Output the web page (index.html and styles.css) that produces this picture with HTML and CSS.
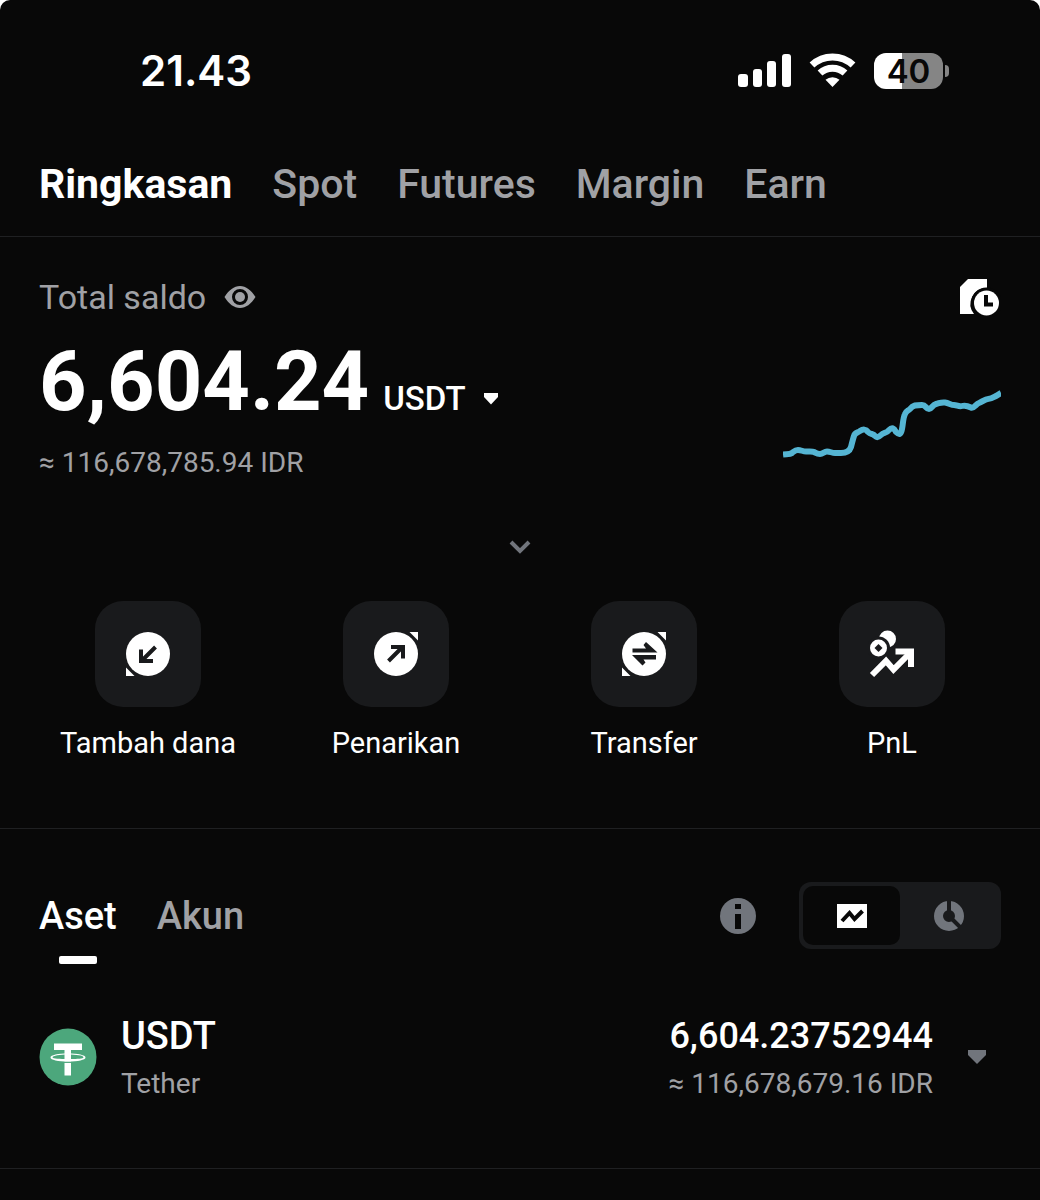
FILE: index.html
```html
<!DOCTYPE html>
<html lang="id">
<head>
  <meta charset="UTF-8" />
  <title>Ringkasan Aset</title>
  <meta name="viewport" content="width=device-width, initial-scale=1" />
  <link rel="stylesheet" href="styles.css">
</head>
<body>
  <div class="app">
    <header class="status-bar">
      <time class="clock">21.43</time>
      <div class="status-icons">
        <svg width="54" height="36" viewBox="0 0 54 36" fill="#fff" aria-hidden="true">
          <rect x="0" y="21" width="10" height="13" rx="3"/>
          <rect x="15" y="16" width="9" height="18" rx="3"/>
          <rect x="29" y="8" width="9" height="26" rx="3"/>
          <rect x="44" y="1" width="9" height="33" rx="3"/>
        </svg>
        <svg width="48" height="36" viewBox="0 0 48 36" fill="none" stroke="#fff" aria-hidden="true">
          <path d="M3 12A30 30 0 0 1 44 12" stroke-width="7"/>
          <path d="M11 20A18.500 18.500 0 0 1 36 20" stroke-width="7"/>
          <path d="M23.500 34l-7-7.200a10.500 10.500 0 0 1 14 0z" fill="#fff" stroke="none"/>
        </svg>
        <div class="battery"><span class="battery-body">40</span><span class="battery-tip"></span></div>
      </div>
    </header>

    <nav class="main-tabs">
      <a href="#ringkasan" class="active">Ringkasan</a>
      <a href="#spot">Spot</a>
      <a href="#futures">Futures</a>
      <a href="#margin">Margin</a>
      <a href="#earn">Earn</a>
    </nav>

    <section class="summary">
      <div class="balance">
        <div class="balance-info">
          <div class="balance-label">
            <span>Total saldo</span>
            <button class="icon-btn" aria-label="Sembunyikan saldo">
              <svg width="32" height="24" viewBox="0 0 32 24" aria-hidden="true">
                <path fill="#a0a1a5" fill-rule="evenodd" d="M.5 12C5 5 10 1 16 1s11 4 15.500 11C27 19 22 23 16 23S5 19 .5 12zM16 4a8 8 0 1 0 0 16 8 8 0 0 0 0-16z"/>
                <circle cx="16" cy="12" r="5" fill="#a0a1a5"/>
              </svg>
            </button>
          </div>
          <div class="balance-amount">
            <strong>6,604.24</strong>
            <button class="currency">USDT
              <svg width="16" height="12" viewBox="0 0 16 12" aria-hidden="true"><path fill="#fff" d="M1 0h14v4L8 11.500 1 4z"/></svg>
            </button>
          </div>
          <div class="balance-fiat">≈ 116,678,785.94 IDR</div>
        </div>
        <div class="balance-side">
          <button class="icon-btn" aria-label="Riwayat">
            <svg width="42" height="40" viewBox="0 0 42 40" aria-hidden="true">
              <path fill="#fff" d="M1 37V10l8-8h19v9a16 16 0 0 0-13 26z"/>
              <circle cx="27.500" cy="26" r="15.500" fill="#080808"/>
              <circle cx="27.500" cy="26" r="12.500" fill="#fff"/>
              <path d="M27 18v9.500h7" fill="none" stroke="#080808" stroke-width="4"/>
            </svg>
          </button>
          <svg class="chart" width="218" height="80" viewBox="0 0 218 80" fill="none" stroke="#55b5d3" stroke-width="6" stroke-linejoin="round" aria-hidden="true">
            <path d="M0 70.500C4 70 7 70.500 9 69S12 66 15 66S20 67.500 23 67.500S29 67 31 68S34 70 37 70S41 67.500 44 67.500S49 69 52 69H58C64 69 67 66 68 63C69 59 70 55 71 52C72 48 75 49 77 47C80 45 83 45 85 48C88 51 90 49 92 52C94 54 96 53 98 51C101 48 103 50 106 46C109 43 111 44 113 48C116 51 118 51 119 45C120 40 120 34 122 30C123 27 125 27 127 25C130 21 133 21 139 21C143 21 143 25 146 25S149 21 153 20S158 18 162 18.500S168 21 171 21S176 23 179 22S185 22 188 23.500S193 20 196 19S202 15 205 15S211 13 213 12S216 10 218 9"/>
          </svg>
        </div>
      </div>
      <button class="expand" aria-label="Tampilkan lebih banyak">
        <svg width="24" height="16" viewBox="0 0 24 16" aria-hidden="true"><path d="M3 3l9 9 9-9" fill="none" stroke="#71757c" stroke-width="4"/></svg>
      </button>

      <div class="actions">
        <button class="action">
          <span class="tile">
            <svg width="48" height="48" viewBox="0 0 48 48" aria-hidden="true">
              <path fill="#fff" d="M2 37.500L10.500 46H2z"/>
              <circle cx="24" cy="24" r="22" fill="#fff"/>
              <path d="M31.500 17L19 29.500M17 19.500V31H29" fill="none" stroke="#191a1c" stroke-width="4"/>
            </svg>
          </span>
          Tambah dana
        </button>
        <button class="action">
          <span class="tile">
            <svg width="48" height="48" viewBox="0 0 48 48" aria-hidden="true">
              <path fill="#fff" d="M37.500 2H46v8.500z"/>
              <circle cx="24" cy="24" r="22" fill="#fff"/>
              <path d="M16.500 31L29 18.500M19 17H31V28.500" fill="none" stroke="#191a1c" stroke-width="4"/>
            </svg>
          </span>
          Penarikan
        </button>
        <button class="action">
          <span class="tile">
            <svg width="48" height="48" viewBox="0 0 48 48" aria-hidden="true">
              <path fill="#fff" d="M37.500 2H46v8.500zM2 37.500L10.500 46H2z"/>
              <circle cx="24" cy="24" r="22" fill="#fff"/>
              <path fill="#191a1c" d="M12.500 18.500H26L23.500 15l2.500-3 11.500 10.500H12.500zM36 29.500H23.500L25.500 32.500l-3 3L12 25H36z"/>
            </svg>
          </span>
          Transfer
        </button>
        <button class="action">
          <span class="tile">
            <svg width="48" height="48" viewBox="0 0 48 48" aria-hidden="true">
              <circle cx="19.500" cy="9" r="8.500" fill="#fff"/>
              <circle cx="10.500" cy="18" r="11.500" fill="#191a1c"/>
              <circle cx="10.500" cy="18" r="8.500" fill="#fff"/>
              <path fill="#191a1c" d="M10.500 14l4 4-4 4-4-4z"/>
              <path d="M4 45L18 31l7.500 8.500L41 24" fill="none" stroke="#fff" stroke-width="6"/>
              <path fill="#fff" d="M27.500 18.500H46V37h-6V24.500H27.500z"/>
            </svg>
          </span>
          PnL
        </button>
      </div>
    </section>

    <section class="assets">
      <div class="assets-head">
        <div class="asset-tabs">
          <button class="active">Aset</button>
          <button>Akun</button>
        </div>
        <button class="icon-btn" aria-label="Info">
          <svg width="36" height="36" viewBox="0 0 36 36" aria-hidden="true">
            <circle cx="18" cy="18" r="18" fill="#71757c"/>
            <path fill="#080808" d="M15 6h6v5h-6zM15 16h6v15h-6z"/>
          </svg>
        </button>
        <div class="view-switch">
          <button class="active" aria-label="Grafik">
            <svg width="30" height="24" viewBox="0 0 30 24" aria-hidden="true">
              <path fill="#fff" d="M0 0h30v24H0z"/>
              <path d="M5 17l7.500-8 5 6L25.500 7" fill="none" stroke="#080808" stroke-width="4"/>
            </svg>
          </button>
          <button aria-label="Alokasi">
            <svg width="30" height="30" viewBox="0 0 30 30" aria-hidden="true">
              <circle cx="15" cy="15" r="10.500" fill="none" stroke="#71757c" stroke-width="9"/>
              <path d="M15 15V0M15 15l11 11" stroke="#191a1c" stroke-width="4"/>
            </svg>
          </button>
        </div>
      </div>

      <div class="asset-row">
        <svg class="coin" width="58" height="58" viewBox="0 0 58 58" aria-hidden="true">
          <circle cx="29" cy="29" r="28.500" fill="#4ca77c"/>
          <path fill="#fff" d="M15 15.500h28V22H32v25.500h-6.500V22H15z"/>
          <path d="M25 34.200h8" fill="none" stroke="#4ca77c" stroke-width="1.500"/>
          <path fill="#fff" fill-rule="evenodd" d="M29 25.500C19 25.500 11.500 27 11.500 29.500S19 33.500 29 33.500 46.500 32 46.500 29.500 39 25.500 29 25.500zM29 26.500C37 26.500 44.500 27.500 44.500 29.300S37 31 29 31 13.500 31 13.500 29.300 21 26.500 29 26.500z"/>
        </svg>
        <div class="asset-name">
          <div class="primary">USDT</div>
          <div class="secondary">Tether</div>
        </div>
        <div class="asset-value">
          <div class="primary amount">6,604.23752944</div>
          <div class="secondary">≈ 116,678,679.16 IDR</div>
        </div>
        <button class="icon-btn row-toggle" aria-label="Rincian USDT">
          <svg width="20" height="16" viewBox="0 0 20 16" aria-hidden="true"><path fill="#71757c" d="M1 1h18v5l-9 9-9-9z"/></svg>
        </button>
      </div>
    </section>
  </div>
</body>
</html>
```
FILE: styles.css
```css
* {
  box-sizing: border-box;
}
body {
  margin: 0;
  background: #fff;
  font-family: Roboto, sans-serif;
  color: #fff;
}
.app {
  background: #080808;
  border-radius: 10px 10px 0 0;
  min-height: 100vh;
}
button {
  background: none;
  border: none;
  padding: 0;
  font: inherit;
  color: inherit;
  cursor: pointer;
}
svg {
  display: block;
  flex-shrink: 0;
}

/* status bar */
.status-bar {
  display: flex;
  justify-content: space-between;
  align-items: center;
  height: 141px;
  padding: 0 91px 0 140px;
}
.clock {
  font-family: Inter, sans-serif;
  font-weight: 600;
  font-size: 42px;
}
.status-icons {
  display: flex;
  align-items: center;
  gap: 17px;
}
.battery {
  display: flex;
  align-items: center;
  gap: 2px;
}
.battery-body {
  width: 69px;
  height: 36px;
  border-radius: 12px;
  background: linear-gradient(90deg, #fff 40%, #858585 40%);
  color: #080808;
  font-family: Inter, sans-serif;
  font-weight: 600;
  font-size: 33px;
  line-height: 36px;
  text-align: center;
}
.battery-tip {
  width: 4px;
  height: 12px;
  border-radius: 0 4px 4px 0;
  background: #858585;
}

/* tabs */
.main-tabs {
  display: flex;
  gap: 40px;
  padding: 19px 39px 28px;
  border-bottom: 1px solid #1f2022;
  font-size: 41px;
  line-height: 48px;
  font-weight: 500;
}
.main-tabs a {
  color: #a0a1a5;
  text-decoration: none;
}
.main-tabs a.active {
  color: #fff;
  font-weight: 700;
}

/* balance */
.summary {
  padding: 40px 0 67px;
  border-bottom: 1px solid #1f2022;
}
.balance {
  display: flex;
  justify-content: space-between;
  padding: 0 39px;
}
.balance-label {
  display: flex;
  align-items: center;
  gap: 18px;
  font-size: 34px;
  line-height: 40px;
  color: #a0a1a5;
}
.balance-amount {
  display: flex;
  align-items: baseline;
  gap: 14px;
  margin-top: 21px;
}
.balance-amount strong {
  font-size: 83px;
  line-height: 88px;
  font-weight: 700;
}
.currency {
  display: flex;
  align-items: center;
  gap: 17px;
  font-size: 33px;
  line-height: 40px;
  font-weight: 500;
}
.balance-fiat {
  margin-top: 19px;
  font-size: 28px;
  line-height: 36px;
  color: #a0a1a5;
}
.balance-side {
  display: flex;
  flex-direction: column;
  align-items: flex-end;
  gap: 67px;
}
.expand {
  display: flex;
  justify-content: center;
  align-items: center;
  width: 100%;
  height: 40px;
  margin-top: 46px;
}

/* actions */
.actions {
  display: grid;
  grid-template-columns: repeat(4, 1fr);
  padding: 34px 24px 0;
}
.action {
  display: flex;
  flex-direction: column;
  align-items: center;
  gap: 18px;
  font-size: 29px;
  line-height: 36px;
}
.tile {
  display: flex;
  justify-content: center;
  align-items: center;
  width: 106px;
  height: 106px;
  border-radius: 28px;
  background: #191a1c;
}

/* assets */
.assets {
  padding-top: 53px;
  border-bottom: 1px solid #1f2022;
}
.assets-head {
  display: flex;
  align-items: center;
  padding: 0 39px;
}
.asset-tabs {
  display: flex;
  gap: 40px;
  margin-right: auto;
  font-size: 38px;
  line-height: 48px;
  font-weight: 500;
  color: #a0a1a5;
}
.asset-tabs .active {
  position: relative;
  color: #fff;
}
.asset-tabs .active::after {
  content: "";
  position: absolute;
  left: 50%;
  bottom: -24px;
  width: 38px;
  height: 8px;
  margin-left: -19px;
  border-radius: 2px;
  background: #fff;
}
.view-switch {
  display: flex;
  margin-left: 43px;
  padding: 4px;
  border-radius: 12px;
  background: #191a1c;
}
.view-switch button {
  display: flex;
  justify-content: center;
  align-items: center;
  width: 97px;
  height: 59px;
  border-radius: 10px;
}
.view-switch .active {
  background: #080808;
}
.asset-row {
  display: flex;
  align-items: center;
  padding: 63px 53px 66px 39px;
}
.asset-name {
  margin-left: 24px;
}
.asset-value {
  margin-left: auto;
  text-align: right;
}
.primary {
  font-size: 38px;
  line-height: 48px;
  font-weight: 500;
}
.primary.amount {
  font-size: 36px;
}
.secondary {
  margin-top: 6px;
  font-size: 28px;
  line-height: 36px;
  color: #a0a1a5;
}
.row-toggle {
  margin-left: 34px;
}
```
